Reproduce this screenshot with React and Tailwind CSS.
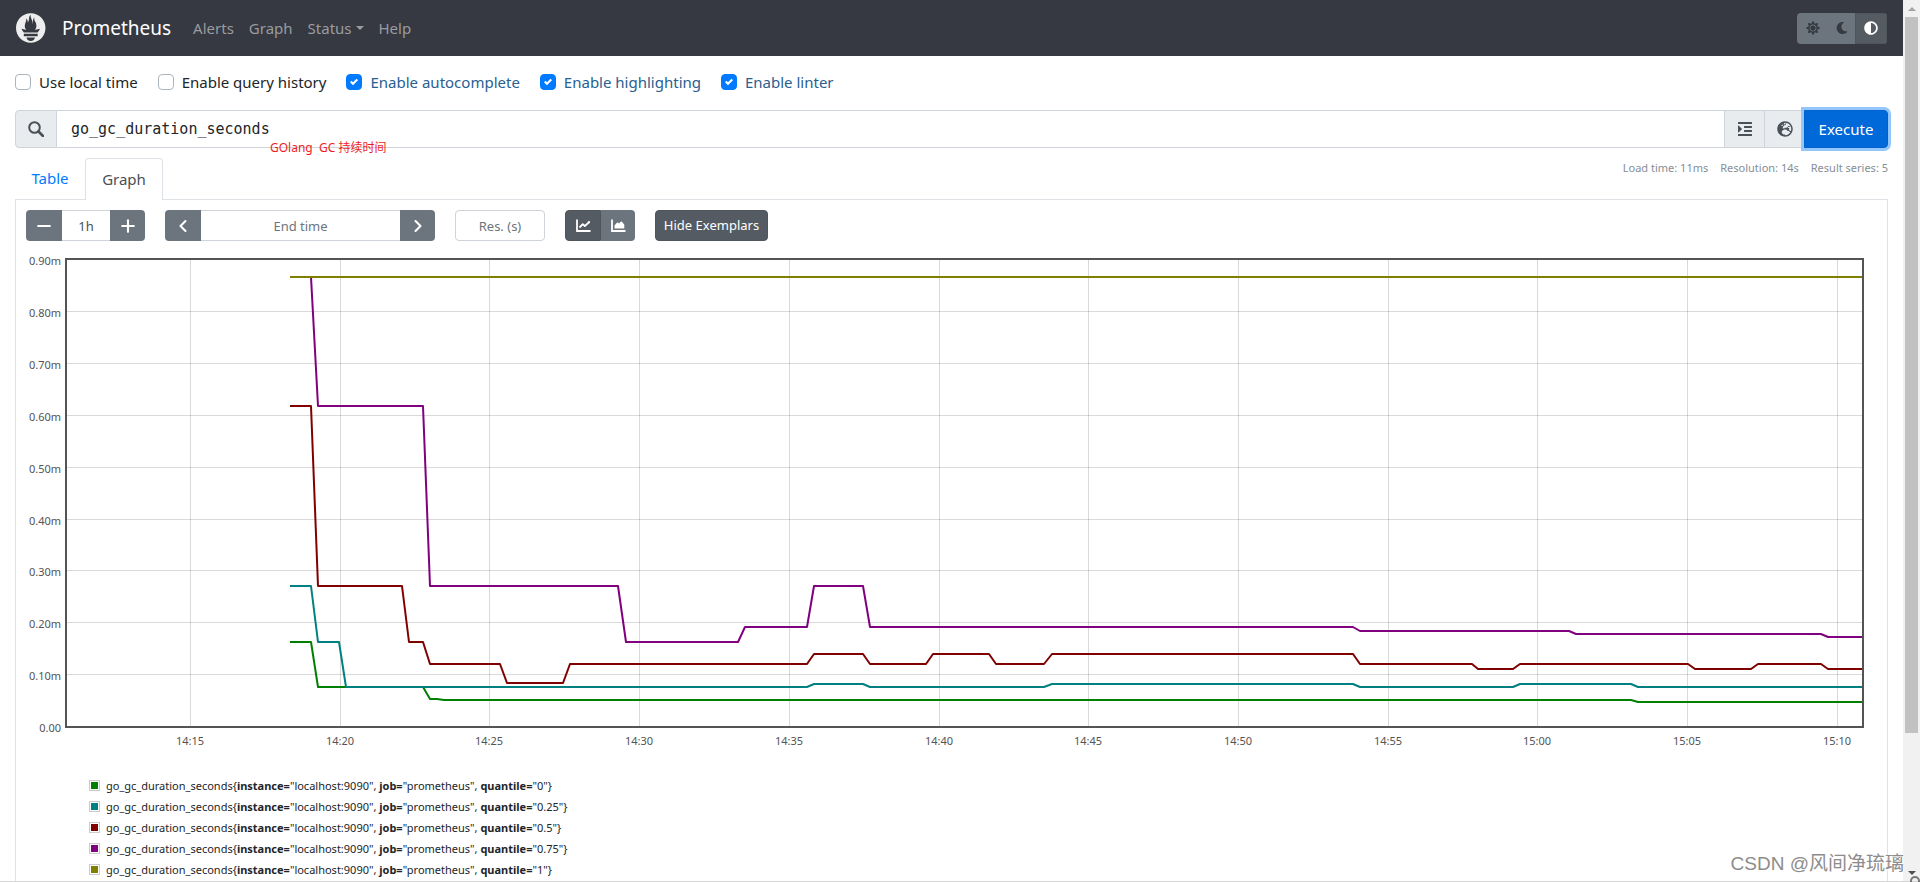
import React, { useState } from 'react';
import { FaMoon, FaAdjust, FaIndent, FaGlobeEurope } from 'react-icons/fa';
import { Minus, Plus, ChevronLeft, ChevronRight } from 'lucide-react';

const navLinks = [
  { label: 'Alerts' },
  { label: 'Graph' },
  { label: 'Status', dropdown: true },
  { label: 'Help' },
];

const options = [
  { id: 'use-local-time', label: 'Use local time', checked: false },
  { id: 'query-history', label: 'Enable query history', checked: false },
  { id: 'autocomplete', label: 'Enable autocomplete', checked: true },
  { id: 'highlighting', label: 'Enable highlighting', checked: true },
  { id: 'linter', label: 'Enable linter', checked: true },
];

// points are x,y inside the 1797 x 468 plot area
const series = [
  {
    quantile: '0',
    color: '#008000',
    points: '224,383 245,383 252,428 357,428 364,440 371,440 378,441 1565,441 1572,443 1796,443',
  },
  {
    quantile: '0.25',
    color: '#008080',
    points:
      '224,327 245,327 252,383 273,383 280,428 741,428 748,425 797,425 804,428 978,428 986,425 1287,425 1294,428 1447,428 1454,425 1565,425 1572,428 1796,428',
  },
  {
    quantile: '0.5',
    color: '#800000',
    points:
      '224,147 245,147 252,327 336,327 343,383 357,383 364,405 434,405 441,424 497,424 504,405 741,405 748,395 797,395 804,405 860,405 867,395 923,395 930,405 978,405 986,395 1287,395 1294,405 1406,405 1412,410 1447,410 1454,405 1622,405 1629,410 1685,410 1692,405 1755,405 1762,410 1796,410',
  },
  {
    quantile: '0.75',
    color: '#800080',
    points:
      '224,18 245,18 252,147 357,147 364,327 552,327 560,383 672,383 679,368 741,368 748,327 797,327 804,368 1287,368 1294,372 1503,372 1510,375 1755,375 1762,378 1796,378',
  },
  {
    quantile: '1',
    color: '#808000',
    points: '224,18 1796,18',
  },
];

const yTicks = [
  '0.90m',
  '0.80m',
  '0.70m',
  '0.60m',
  '0.50m',
  '0.40m',
  '0.30m',
  '0.20m',
  '0.10m',
  '0.00',
];

const xTicks = [
  '14:15',
  '14:20',
  '14:25',
  '14:30',
  '14:35',
  '14:40',
  '14:45',
  '14:50',
  '14:55',
  '15:00',
  '15:05',
  '15:10',
];

const tickX = (i) => Math.round(124 + i * 149.7);
const tickY = (i) => Math.round(i * 51.9);

const Logo = () => (
  <svg viewBox="0 0 115.3 114.4" className="h-[30px] w-[30px]" aria-hidden="true">
    <path
      fill="#eeeeee"
      d="M56.667,0.667C25.372,0.667,0,26.036,0,57.332c0,31.295,25.372,56.666,56.667,56.666s56.666-25.371,56.666-56.666C113.333,26.036,87.961,0.667,56.667,0.667z M56.667,106.722c-8.904,0-16.123-5.948-16.123-13.283H72.79C72.79,100.773,65.571,106.722,56.667,106.722z M83.297,89.04H30.034v-9.658h53.264V89.04z M83.106,74.411h-52.92c-0.176-0.203-0.356-0.403-0.526-0.609c-5.452-6.62-6.736-10.076-7.983-13.598c-0.021-0.116,6.611,1.355,11.314,2.413c0,0,2.42,0.56,5.958,1.205c-3.397-3.982-5.414-9.044-5.414-14.218c0-11.359,8.712-21.285,5.569-29.308c3.059,0.249,6.331,6.456,6.552,16.161c3.252-4.494,4.613-12.701,4.613-17.733c0-5.21,3.433-11.262,6.867-11.469c-3.061,5.045,0.793,9.37,4.219,20.099c1.285,4.03,1.121,10.812,2.113,15.113C63.797,33.534,65.333,20.5,71,16c-2.5,5.667,0.37,12.758,2.333,16.167c3.167,5.5,5.087,9.667,5.087,17.548c0,5.284-1.951,10.259-5.242,14.148c3.742-0.702,6.326-1.335,6.326-1.335l12.152-2.371C91.657,60.156,89.891,67.418,83.106,74.411z"
    />
  </svg>
);

const SunIcon = () => (
  <svg viewBox="0 0 512 512" className="h-3.5 w-3.5" fill="currentColor" aria-hidden="true">
    <path d="M256 160c-52.9 0-96 43.1-96 96s43.1 96 96 96 96-43.1 96-96-43.1-96-96-96zm246.4 80.5l-94.7-47.3 33.5-100.4c4.5-13.6-8.4-26.5-21.9-21.9l-100.4 33.5-47.4-94.8c-6.4-12.8-24.6-12.8-31 0l-47.3 94.7L92.7 70.8c-13.6-4.5-26.5 8.4-21.9 21.9l33.5 100.4-94.7 47.4c-12.8 6.4-12.8 24.6 0 31l94.7 47.3-33.5 100.5c-4.5 13.6 8.4 26.5 21.9 21.9l100.4-33.5 47.3 94.7c6.4 12.8 24.6 12.8 31 0l47.3-94.7 100.4 33.5c13.6 4.5 26.5-8.4 21.9-21.9l-33.5-100.4 94.7-47.3c13-6.5 13-24.7.2-31.1zm-155.9 106c-49.9 49.9-131.1 49.9-181 0-49.9-49.9-49.9-131.1 0-181 49.9-49.9 131.1-49.9 181 0 49.9 49.9 49.9 131.1 0 181z" />
  </svg>
);

const SearchIcon = () => (
  <svg viewBox="0 0 16 16" className="h-4 w-4" fill="none" stroke="currentColor" aria-hidden="true">
    <circle cx="6.5" cy="6.5" r="5.3" strokeWidth="2" />
    <path d="M10.5 10.5L15 15" strokeWidth="2.6" strokeLinecap="round" />
  </svg>
);

const LineChartIcon = () => (
  <svg viewBox="0 0 15 13" className="h-[13px] w-[15px]" fill="none" stroke="currentColor" aria-hidden="true">
    <path d="M1 .5V12H14.5" strokeWidth="1.8" />
    <path d="M3.5 8.5L6.8 5.2L8.8 7L13.5 2.8" strokeWidth="1.8" strokeLinejoin="round" />
    <path d="M11.5 2.2H14V4.5z" fill="currentColor" stroke="none" />
  </svg>
);

const AreaChartIcon = () => (
  <svg viewBox="0 0 15 13" className="h-[13px] w-[15px]" aria-hidden="true">
    <path d="M1 .5V12H14.5" fill="none" stroke="currentColor" strokeWidth="1.8" />
    <path
      d="M3.5 9.5V6.6L5.6 3.9Q6.4 3 7.3 3.8L8.2 4.5L9.4 3Q10.2 2.2 11.2 3L13.3 5.8V9.5z"
      fill="currentColor"
    />
  </svg>
);

const Navbar = () => (
  <nav className="flex h-14 items-center bg-[#363941] px-4">
    <Logo />
    <a href="#home" className="ml-4 text-[19px] text-white">
      Prometheus
    </a>
    <ul className="ml-[22px] flex gap-[15px] text-[15px] text-[#999ca0]">
      {navLinks.map(({ label, dropdown }) => (
        <li key={label}>
          <a href={`#${label}`} className="flex items-center gap-1">
            {label}
            {dropdown && (
              <span className="border-x-4 border-t-4 border-x-transparent border-t-current" />
            )}
          </a>
        </li>
      ))}
    </ul>
    <div className="ml-auto flex h-[31px] overflow-hidden rounded bg-[#6c757d] text-[#343a40]">
      <button type="button" aria-label="Light theme" className="flex w-8 items-center justify-center">
        <SunIcon />
      </button>
      <button type="button" aria-label="Dark theme" className="flex w-[26px] items-center justify-center">
        <FaMoon className="h-3 w-3" />
      </button>
      <button
        type="button"
        aria-label="Browser theme"
        className="flex w-8 items-center justify-center border border-[#4e555b] bg-[#545b62] text-white"
      >
        <FaAdjust className="h-3.5 w-3.5" />
      </button>
    </div>
  </nav>
);

const Option = ({ id, label, checked: initial }) => {
  const [checked, setChecked] = useState(initial);
  return (
    <div className="flex items-center gap-2">
      <span className="relative flex h-4 w-4">
        <input
          id={id}
          type="checkbox"
          checked={checked}
          onChange={(e) => setChecked(e.target.checked)}
          className="h-4 w-4 appearance-none rounded border border-[#adb5bd] bg-white checked:border-[#007bff] checked:bg-[#007bff]"
        />
        {checked && (
          <svg viewBox="0 0 8 8" className="pointer-events-none absolute inset-1 h-2 w-2">
            <path
              fill="#fff"
              d="M6.564.75l-3.59 3.612-1.538-1.55L0 4.26l2.974 2.99L8 2.193z"
            />
          </svg>
        )}
      </span>
      <label htmlFor={id} className={checked ? 'text-[#286090]' : 'text-[#212529]'}>
        {label}
      </label>
    </div>
  );
};

const ExpressionInput = () => (
  <div className="relative mt-[17px] flex h-[38px]">
    <span className="flex w-[42px] items-center justify-center rounded-l border border-[#ced4da] bg-[#e9ecef] text-[#495057]">
      <SearchIcon />
    </span>
    <input
      type="text"
      aria-label="Expression"
      defaultValue="go_gc_duration_seconds"
      className="min-w-0 flex-1 border-y border-[#ced4da] px-3.5 font-['DejaVu_Sans_Mono',monospace] text-[15px] text-[#212529] outline-none"
    />
    <button
      type="button"
      aria-label="Format expression"
      className="flex w-10 items-center justify-center border border-r-0 border-[#ced4da] bg-[#e9ecef] text-[#495057]"
    >
      <FaIndent className="h-4 w-4" />
    </button>
    <button
      type="button"
      aria-label="Metrics explorer"
      className="flex w-10 items-center justify-center border border-r-0 border-[#ced4da] bg-[#e9ecef] text-[#495057]"
    >
      <FaGlobeEurope className="h-4 w-4" />
    </button>
    <button
      type="button"
      className="w-21 rounded-r border border-[#0062cc] bg-[#0069d9] text-[15px] text-white shadow-[0_0_0_3px_#94c6fe]"
    >
      Execute
    </button>
    <span className="absolute top-[30px] left-[255px] font-['Noto_Sans','Noto_Sans_CJK_SC',sans-serif] text-xs whitespace-pre text-[#ed1c24]">
      GOlang  GC 持续时间
    </span>
  </div>
);

const grayButton = 'flex items-center justify-center bg-[#6c757d] text-white';
const textInput =
  'h-[31px] border-[#ced4da] text-center text-[#495057] outline-none placeholder:text-[#6c757d]';

const GraphControls = () => (
  <div className="flex h-[31px] text-[13px]">
    <button type="button" aria-label="Decrease range" className={`${grayButton} w-9 rounded-l`}>
      <Minus size={20} strokeWidth={2.5} />
    </button>
    <input
      type="text"
      aria-label="Range"
      defaultValue="1h"
      className={`${textInput} w-12 border-y`}
    />
    <button type="button" aria-label="Increase range" className={`${grayButton} w-[35px] rounded-r`}>
      <Plus size={20} strokeWidth={2.5} />
    </button>

    <button
      type="button"
      aria-label="Earlier end time"
      className={`${grayButton} ml-5 w-9 rounded-l`}
    >
      <ChevronLeft size={20} strokeWidth={2.5} />
    </button>
    <input
      type="text"
      aria-label="End time"
      placeholder="End time"
      className={`${textInput} w-[199px] border-y`}
    />
    <button type="button" aria-label="Later end time" className={`${grayButton} w-[35px] rounded-r`}>
      <ChevronRight size={20} strokeWidth={2.5} />
    </button>

    <input
      type="text"
      aria-label="Resolution"
      placeholder="Res. (s)"
      className={`${textInput} ml-5 w-[90px] rounded border`}
    />

    <button
      type="button"
      aria-label="Show unstacked line graph"
      className="ml-5 flex w-9 items-center justify-center rounded-l border border-[#4e555b] bg-[#545b62] text-white"
    >
      <LineChartIcon />
    </button>
    <button type="button" aria-label="Show stacked graph" className={`${grayButton} w-[34px] rounded-r`}>
      <AreaChartIcon />
    </button>

    <button
      type="button"
      className="ml-5 w-[113px] rounded border border-[#4e555b] bg-[#545b62] text-white"
    >
      Hide Exemplars
    </button>
  </div>
);

const Chart = () => (
  <svg
    viewBox="0 0 1851 500"
    className="mt-4 block w-full overflow-visible font-['Noto_Sans',sans-serif] text-[11px]"
    role="img"
    aria-label="go_gc_duration_seconds over the last hour"
  >
    <g transform="translate(40 2)">
      <g fill="#000" fillOpacity="0.15">
        {xTicks.map((tick, i) => (
          <rect key={tick} x={tickX(i)} y="0" width="1" height="468" />
        ))}
        {yTicks.slice(1, -1).map((tick, i) => (
          <rect key={tick} x="0" y={tickY(i + 1)} width="1797" height="1" />
        ))}
      </g>
      {series.map(({ quantile, color, points }) => (
        <polyline
          key={quantile}
          points={points}
          fill="none"
          stroke={color}
          strokeWidth="2"
          strokeLinejoin="round"
        />
      ))}
      <rect x="0" y="0" width="1797" height="468" fill="none" stroke="#545454" strokeWidth="2" />
      <g fill="#545454">
        {yTicks.map((tick, i) => (
          <text key={tick} x="-5" y={tickY(i) + 6} textAnchor="end">
            {tick}
          </text>
        ))}
        {xTicks.map((tick, i) => (
          <text key={tick} x={tickX(i)} y="486" textAnchor="middle">
            {tick}
          </text>
        ))}
      </g>
    </g>
  </svg>
);

const Legend = () => (
  <ul className="mt-[18px] ml-[63px] text-[11px] leading-[21px] text-[#212529]">
    {series.map(({ quantile, color }) => (
      <li key={quantile} className="flex items-center gap-1.5">
        <span className="h-[11px] w-[11px] border border-[#ccc] p-px">
          <span className="block h-full w-full" style={{ backgroundColor: color }} />
        </span>
        <span>
          go_gc_duration_seconds{'{'}
          <strong>instance=</strong>"localhost:9090", <strong>job=</strong>"prometheus",{' '}
          <strong>quantile=</strong>"{quantile}"{'}'}
        </span>
      </li>
    ))}
  </ul>
);

const Scrollbar = () => (
  <div className="flex w-[17px] shrink-0 flex-col items-center bg-[#f1f1f1]">
    <span className="mt-[7px] border-x-4 border-b-4 border-x-transparent border-b-[#a3a3a3]" />
    <span className="mt-1.5 h-[716px] w-[13px] bg-[#c1c1c1]" />
    <span className="mt-auto mb-[7px] border-x-4 border-t-4 border-x-transparent border-t-[#505050]" />
  </div>
);

const App = () => {
  return (
    <div className="relative flex h-screen overflow-hidden bg-white font-['Noto_Sans',sans-serif]">
      <div className="min-w-0 flex-1">
        <Navbar />
        <main className="px-[15px] pt-[15px]">
          <div className="flex h-[22px] gap-5 text-[15px]">
            {options.map((option) => (
              <Option key={option.id} {...option} />
            ))}
          </div>
          <ExpressionInput />
          <div className="mt-2.5 flex justify-between">
            <div role="tablist" className="flex text-[15px]">
              <button type="button" role="tab" aria-selected="false" className="h-[41px] w-[70px] text-[#007bff]">
                Table
              </button>
              <button
                type="button"
                role="tab"
                aria-selected="true"
                className="z-10 -mb-px h-[42px] w-[78px] rounded-t border border-b-0 border-[#dee2e6] bg-white text-[#495057]"
              >
                Graph
              </button>
            </div>
            <div className="flex gap-3 text-[11px] leading-5 text-[#868e96]">
              <span>Load time: 11ms</span>
              <span>Resolution: 14s</span>
              <span>Result series: 5</span>
            </div>
          </div>
          <div className="h-[720px] border border-[#dee2e6] p-2.5">
            <GraphControls />
            <Chart />
            <Legend />
          </div>
        </main>
      </div>
      <Scrollbar />
      <div className="absolute inset-x-0 bottom-0 h-px bg-[#d5d5d5]" />
      <span className="absolute right-0 -bottom-1.5 h-3 w-2.5 rounded-full border-2 border-[#777]" />
      <span className="absolute right-4 bottom-1 font-['Liberation_Sans','Noto_Sans_CJK_SC',sans-serif] text-[19px] text-[#8c8c8c] [text-shadow:1px_1px_0_#fff]">
        CSDN @风间净琉璃
      </span>
    </div>
  );
};

export default App;
